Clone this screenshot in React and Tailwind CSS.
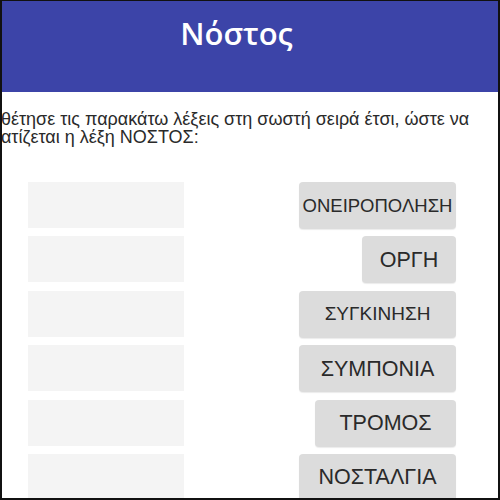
import React from "react";

const words = [
  { t: "ΟΝΕΙΡΟΠΟΛΗΣΗ", w: "w-[157px]", f: "text-[18.5px]" },
  { t: "ΟΡΓΗ", w: "w-[94px]", f: "text-[21.5px]" },
  { t: "ΣΥΓΚΙΝΗΣΗ", w: "w-[157px]", f: "text-[19px]" },
  { t: "ΣΥΜΠΟΝΙΑ", w: "w-[157px]", f: "text-[21.5px]" },
  { t: "ΤΡΟΜΟΣ", w: "w-[141px]", f: "text-[21.5px]" },
  { t: "ΝΟΣΤΑΛΓΙΑ", w: "w-[157px]", f: "text-[21.5px]" },
];

export default function App() {
  return (
    <div className="w-[500px] h-[500px] overflow-hidden bg-white border-[#111] border-t border-l-2 border-r-2 border-b-2 font-['Liberation_Sans',Arial,sans-serif]">
      <div className="h-[91px] bg-[#3c44a8] flex justify-center pt-[12px]">
        <h1 className="text-white text-[31px] font-semibold leading-[40px] font-['Open_Sans',sans-serif] ml-[-27px]">
          Νόστος
        </h1>
      </div>
      <p className="mt-[18px] ml-[-42px] text-[#2a2a2a] text-[18px] leading-[18px] whitespace-nowrap">
        Τοποθέτησε τις παρακάτω λέξεις στη σωστή σειρά έτσι, ώστε να
        <br />
        σχηματίζεται η λέξη ΝΟΣΤΟΣ:
      </p>
      <div className="mt-[36px] flex flex-col gap-[8.4px]">
        {words.map((w) => (
          <div key={w.t} className="flex items-stretch justify-between h-[46px] pl-[26px] pr-[42px]">
            <div className="w-[156px] bg-[#f4f4f4]" />
            <div
              className={`${w.w} ${w.f} h-[47px] rounded-[4px] bg-[#dcdcdc] text-[#2a2a2a] flex items-center justify-center shadow-[0_1px_1px_rgba(0,0,0,0.08)]`}
            >
              {w.t}
            </div>
          </div>
        ))}
      </div>
    </div>
  );
}
